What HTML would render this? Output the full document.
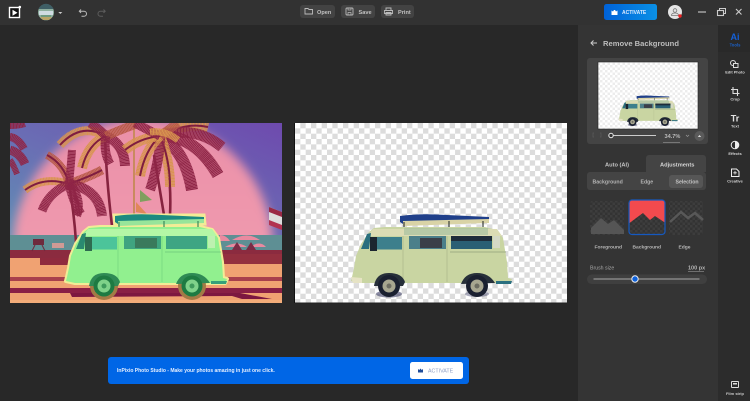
<!DOCTYPE html>
<html><head><meta charset="utf-8"><style>
html,body{margin:0;padding:0;background:#282828;}
body{width:750px;height:401px;overflow:hidden;position:relative;font-family:"Liberation Sans",sans-serif;}
svg{position:absolute;left:0;top:0}
text{font-family:"Liberation Sans",sans-serif;font-weight:700}
.r,.g,.o{fill:none;stroke-linecap:butt;stroke-dasharray:1.2 .25}
.r{stroke:#8f2546}.g{stroke:#d89450}.o{stroke:#b85a48}
.m{fill:none;stroke:#7f1f40;stroke-width:2}
</style></head><body>
<svg width="750" height="401" viewBox="0 0 750 401">
<defs>
<pattern id="ck" width="10.67" height="10.67" patternUnits="userSpaceOnUse" x="295" y="123"><rect width="10.67" height="10.67" fill="#fff"/><rect x="5.335" width="5.335" height="5.335" fill="#dcdcdc"/><rect y="5.335" width="5.335" height="5.335" fill="#dcdcdc"/></pattern>
<pattern id="ck2" width="5" height="5" patternUnits="userSpaceOnUse"><rect width="5" height="5" fill="#fff"/><rect width="2.500" height="2.500" fill="#ececec"/><rect x="2.500" y="2.500" width="2.500" height="2.500" fill="#ececec"/></pattern>
<pattern id="dk" width="5" height="5" patternUnits="userSpaceOnUse"><rect width="5" height="5" fill="#333"/><rect width="2.500" height="2.500" fill="#3d3d3d"/><rect x="2.500" y="2.500" width="2.500" height="2.500" fill="#3d3d3d"/></pattern>
<linearGradient id="sky" x1="0" y1="1" x2="1" y2="0"><stop offset="0" stop-color="#5f8fb5"/><stop offset=".45" stop-color="#6a6eb4"/><stop offset="1" stop-color="#6e4aae"/></linearGradient>
<linearGradient id="pk" x1="0" y1="0" x2="0" y2="1"><stop offset="0" stop-color="#ea8fa8"/><stop offset="1" stop-color="#f5a4b4"/></linearGradient>
<linearGradient id="act" x1="0" x2="1"><stop offset="0" stop-color="#0062d8"/><stop offset="1" stop-color="#0a90e6"/></linearGradient>
<clipPath id="c1"><rect x="10" y="123" width="272" height="180"/></clipPath>
<filter id="b1" x="-20%" y="-20%" width="140%" height="140%"><feGaussianBlur stdDeviation="5"/></filter>
<filter id="b05"><feGaussianBlur stdDeviation=".35"/></filter>
<g id="vanR">
 <ellipse cx="389" cy="294" rx="13" ry="3.500" fill="#2d2f5a" opacity=".55"/>
 <ellipse cx="477" cy="294" rx="12" ry="3" fill="#2d2f5a" opacity=".4"/>
 <path d="M400 216q20-3 47-1l42 2 0 3-86 4-3-2z" fill="#1f3f8a"/>
 <path d="M403 221l86-2 0 4-86 3z" fill="#d9d3a6"/>
 <path d="M404 222v13M449 221v13M483 221v13" stroke="#3a3f3a" stroke-width="1.200" fill="none"/>
 <path d="M352 277L351 281L360 283H510L512 279L508 278L507 262L503 238L497 230L485 227H385L374 228L369 232L361 244L356 256L354 268Z" fill="#c9d5a2"/>
 <path d="M373 229H497L502 236H368Z" fill="#dcdcb4"/>
 <path d="M404 228h84v7h-84z" fill="#a6c0a0" opacity=".7"/>
 <path d="M361 249l6-15 4-1-2 16z" fill="#2a6f7f"/>
 <rect x="375" y="237" width="27" height="12.500" fill="#3d7f8c"/><rect x="370" y="237" width="7" height="14" fill="#1b2530"/>
 <rect x="409" y="236" width="37" height="13" fill="#4b7f8a"/><rect x="420" y="238" width="22" height="10" fill="#3a3f48"/>
 <rect x="451" y="236" width="41" height="13" fill="#2a5f74"/><rect x="451" y="236" width="41" height="5" fill="#1e2c3a"/>
 <rect x="493" y="236" width="7" height="12" fill="#d5d9c6"/>
 <path d="M450 252h56" stroke="#8f9f7a" stroke-width=".8"/>
 <path d="M403 236v46M447 236v46" stroke="#a7b385" stroke-width=".6"/>
 <path d="M374 286q2-13 15-13t16 9l-2 4zM461 284q4-11 16-11t18 10z" fill="#27303a"/>
 <path d="M496 281h16l-1 3h-15z" fill="#2a6f7f"/>
 <circle cx="389" cy="286" r="11" fill="#1a2030"/><circle cx="389" cy="286" r="6.500" fill="#a7a690"/><circle cx="389" cy="286" r="2.500" fill="#6d6d62"/>
 <circle cx="477" cy="286" r="11" fill="#1a2030"/><circle cx="477" cy="286" r="6.500" fill="#a7a690"/><circle cx="477" cy="286" r="2.500" fill="#6d6d62"/>
 <path d="M351 277l11 1v5h-9z" fill="#e6e3c4"/>
</g>
</defs>

<!-- chrome -->
<rect width="750" height="401" fill="#282828"/>
<rect width="750" height="25" fill="#323232"/>
<rect x="578" y="25" width="140" height="376" fill="#343434"/>
<rect x="718" y="25" width="32" height="376" fill="#2c2c2c"/>
<rect x="718" y="25" width="32" height="27" fill="#292929"/>

<!-- logo -->
<rect x="9.500" y="7.500" width="10" height="10" fill="#111" stroke="#fff" stroke-width="1.400"/>
<path d="M12.500 9.800l5 3-5 3z" fill="#fff"/><circle cx="19.800" cy="7" r="1.300" fill="#fff"/>
<circle cx="46" cy="12.300" r="8" fill="#8fb0a0"/><path d="M38.500 9a8 8 0 0 1 15 0z" fill="#3f5f66"/><path d="M39 11h14v4H39z" fill="#cfdbe2"/><path d="M41 15h10v2H41z" fill="#6f9a80"/><path d="M40 17h12l-3 3h-6z" fill="#b8a468"/>
<path d="M58.300 12l2 2 2-2z" fill="#ccc"/>
<path d="M81 9.500l-1.700 1.700 1.700 1.700M79.500 11.200h4.500a2.500 2.500 0 0 1 0 5h-2.500" fill="none" stroke="#bbb" stroke-width="1"/>
<path d="M103.500 9.500l1.700 1.700-1.700 1.700M105 11.200h-4.500a2.500 2.500 0 0 0 0 5h2.500" fill="none" stroke="#5c5c5c" stroke-width="1"/>

<rect x="300" y="5" width="35" height="13" rx="3" fill="#434343"/>
<rect x="341" y="5" width="34" height="13" rx="3" fill="#434343"/>
<rect x="381" y="5" width="33" height="13" rx="3" fill="#434343"/>
<path d="M305 8.500h3l1 1h3.500v4.500h-7.500z" fill="none" stroke="#bbb" stroke-width=".9"/>
<rect x="346" y="8" width="7" height="7" rx="1" fill="none" stroke="#bbb" stroke-width=".9"/><path d="M348 8v2h3V8M348 15v-2.500h3V15" fill="none" stroke="#bbb" stroke-width=".7"/>
<path d="M386 8h5v2.500h-5zM384.500 10.500h8v3h-8zM386 12.500h5V15h-5z" fill="none" stroke="#bbb" stroke-width=".9"/>
<text x="317" y="14" font-size="5.600" fill="#c2c2c2">Open</text>
<text x="358.500" y="14" font-size="5.600" fill="#c2c2c2">Save</text>
<text x="398" y="14" font-size="5.600" fill="#c2c2c2">Print</text>

<rect x="604" y="4" width="53" height="16" rx="2.500" fill="url(#act)"/>
<path d="M611.500 10.500l1.500 1 1-1.500h1l1 1.500 1.500-1v4.500h-6z" fill="#fff"/>
<text x="622" y="14" font-size="5" fill="#dcebff">ACTIVATE</text>
<circle cx="675" cy="12" r="7" fill="#e4e4e4"/><circle cx="675" cy="10.500" r="1.800" fill="none" stroke="#777" stroke-width=".8"/><path d="M671.500 15.500q0-2.500 3.500-2.500t3.500 2.500z" fill="none" stroke="#777" stroke-width=".8"/>
<circle cx="680" cy="16" r="1.700" fill="#e22"/>
<path d="M698 12h8" stroke="#ccc" stroke-width="1.100"/>
<rect x="717.500" y="10.500" width="6" height="5" fill="none" stroke="#ccc" stroke-width="1.100"/><path d="M719.500 10v-1.500h6v5h-1.500" fill="none" stroke="#ccc" stroke-width="1"/>
<path d="M736 9l5.500 5.500M741.500 9L736 14.500" stroke="#ccc" stroke-width="1.100"/>

<!-- left photo -->
<g clip-path="url(#c1)">
 <rect x="10" y="123" width="272" height="115" fill="url(#sky)"/>
 <circle cx="143" cy="248" r="130" fill="url(#pk)" filter="url(#b1)"/>
 <rect x="10" y="235" width="272" height="16" fill="#5e8f94"/>
 <path d="M10 250h272v10H10z" fill="#8b2b3f"/>
 <rect x="10" y="258" width="272" height="46" fill="#f0a272"/>
 <rect x="40" y="258" width="30" height="7" fill="#8f2a3e"/><rect x="220" y="254" width="62" height="10" fill="#94303f"/>
 <rect x="10" y="277" width="272" height="4" fill="#a83f4c"/>
 <rect x="10" y="288" width="272" height="5" fill="#8a1f45"/>
 <path d="M70 293h170l32 6h-30l-10-3-160 1z" fill="#7d1740"/>
 <rect x="10" y="300" width="272" height="3" fill="#f4ad7a"/>
 <!-- pole & flags -->
 <path d="M134 123v95" stroke="#c98a5f" stroke-width="2"/>
 <path d="M140 190l12 10-12 2z" fill="#7f9f5f"/><path d="M136 202l11 12-11-2z" fill="#e0875a"/>
 <path d="M269 207l13 5v16l-13-5z" fill="#ddd"/><path d="M269 207l13 5v5l-13-5z" fill="#9a2845"/><path d="M269 220l13 5v5l-13-5z" fill="#b23350"/>
 <!-- beach stuff -->
 <path d="M232 240q15-9 28 0zM250 247q10-7 16 0zM225 247q12-7 22 0zM220 235q6 0 10 6h-10z" fill="#e98aa0"/>
 <path d="M232 250l5-8 5 8zM246 250l5-8 5 8z" fill="#7a2b45"/>
 <rect x="33" y="239" width="11" height="6" fill="#6e2a3d"/><path d="M35 245l-3 6M42 245l3 6" stroke="#6e2a3d"/>
 <rect x="52" y="243" width="12" height="5" fill="#d09a95"/>
 <!-- trunks -->
 <path d="M76 242q-2-30-7-58M112 226q-6-50-7-92M170 215q2-40-8-80M164 215q-5-30-10-60" fill="none" stroke="#86233f" stroke-width="2.600"/>
 <g filter="url(#b05)">
  <!-- crown 1 -->
  <path class="g" stroke-width="8" d="M69 184q-25-8-44 6"/><path class="m" d="M69 184q-25-8-44 6"/>
  <path class="o" stroke-width="8" d="M69 184q-5-20-22-29"/><path class="m" d="M69 184q-5-20-22-29"/>
  <path class="o" stroke-width="9" d="M69 184q22-8 33-14"/><path class="m" d="M69 184q22-8 33-14"/>
  <path class="r" stroke-width="10" d="M69 184q30 5 33 32"/>
  <path class="r" stroke-width="9" d="M69 184q-20 8-27 27"/>
  <path class="r" stroke-width="8" d="M69 184q2-20 3-34"/>
  <path class="r" stroke-width="9" d="M69 184q5 20 12 30"/>
  <path class="r" stroke-width="8" d="M69 184q14 14 8 32"/>
  <!-- crown 2 -->
  <path class="g" stroke-width="9" d="M106 136q-25-14-46 9"/><path class="m" d="M106 136q-25-14-46 9"/>
  <path class="g" stroke-width="10" d="M106 136q-18 8-24 32"/><path class="m" d="M106 136q-18 8-24 32"/>
  <path class="r" stroke-width="10" d="M106 136q18 8 19 30"/>
  <path class="r" stroke-width="9" d="M106 136q-8-8-16-13"/>
  <path class="o" stroke-width="9" d="M106 136q14-6 30-12"/>
  <path class="r" stroke-width="9" d="M106 136q-3 15 4 28"/>
  <!-- crown 3 -->
  <path class="g" stroke-width="10" d="M160 136Q185 122 208 127"/><path class="m" d="M160 136Q185 122 208 127"/>
  <path class="r" stroke-width="11" d="M160 136Q195 125 222 147"/>
  <path class="r" stroke-width="12" d="M160 136Q195 135 218 175"/>
  <path class="r" stroke-width="12" d="M160 136Q185 150 192 190"/>
  <path class="g" stroke-width="10" d="M160 136Q170 160 170 187"/><path class="m" d="M160 136Q170 160 170 187"/>
  <path class="r" stroke-width="10" d="M160 136Q160 160 150 190"/>
  <path class="g" stroke-width="10" d="M160 136Q145 150 140 176"/><path class="m" d="M160 136Q145 150 140 176"/>
  <path class="g" stroke-width="10" d="M160 136Q140 138 125 150"/><path class="m" d="M160 136Q140 138 125 150"/>
  <path class="r" stroke-width="9" d="M160 136Q148 130 135 123"/>
  <path class="o" stroke-width="9" d="M160 136Q168 130 178 123"/>
  <path class="g" stroke-width="7" d="M150 132Q165 130 178 140"/>
  <!-- corner palm -->
  <path class="r" stroke-width="6" d="M10 126q8 0 15-2"/><path class="r" stroke-width="8" d="M10 137q8 1 14 12"/><path class="r" stroke-width="9" d="M10 150q10 3 15 14"/><path class="r" stroke-width="6" d="M10 160q3 4 7 14"/>
 </g>
 <!-- green van (right van shifted by -285) -->
 <g transform="translate(-285 0)">
  <path d="M352 277L351 281L360 283H510L512 279L508 278L507 262L503 238L497 230L485 227H385L374 228L369 232L361 244L356 256L354 268Z" fill="#f2ec96" stroke="#f2ec96" stroke-width="4" stroke-linejoin="round"/>
  <path d="M399 215h90l1 9-90 1z" fill="#f2ec96" stroke="#f2ec96" stroke-width="3"/>
  <circle cx="389" cy="286" r="14" fill="#a37a45"/><circle cx="477" cy="286" r="14" fill="#a37a45"/>
  <path d="M400 216q20-3 47-1l42 2 0 3-86 4-3-2z" fill="#1c8a80"/>
  <path d="M403 221l86-2 0 4-86 3z" fill="#97e59a"/>
  <path d="M404 222v13M449 221v13M483 221v13" stroke="#3e8a5a" stroke-width="1.200" fill="none"/>
  <path d="M352 277L351 281L360 283H510L512 279L508 278L507 262L503 238L497 230L485 227H385L374 228L369 232L361 244L356 256L354 268Z" fill="#91f08f"/>
  <path d="M373 229H497L502 236H368Z" fill="#b4f7a6"/>
  <path d="M361 249l6-15 4-1-2 16z" fill="#2a8a70"/>
  <rect x="375" y="237" width="27" height="12.500" fill="#4cc49a"/><rect x="370" y="237" width="7" height="14" fill="#2e6b50"/>
  <rect x="409" y="236" width="37" height="13" fill="#3fa480"/><rect x="420" y="238" width="22" height="10" fill="#3a7a5c"/>
  <rect x="451" y="236" width="41" height="13" fill="#3ea583"/>
  <rect x="493" y="236" width="7" height="12" fill="#bdf1b0"/>
  <path d="M450 252h56" stroke="#6cc77a" stroke-width=".8"/>
  <path d="M403 236v46M447 236v46" stroke="#70d07c" stroke-width=".6"/>
  <path d="M374 286q2-13 15-13t16 9l-2 4zM461 284q4-11 16-11t18 10z" fill="#2f8a55"/>
  <path d="M496 281h16l-1 3h-15z" fill="#36a07a"/>
  <circle cx="389" cy="286" r="10.500" fill="#1e7a42"/><circle cx="389" cy="286" r="6.500" fill="#7fd28a"/><circle cx="389" cy="286" r="2.500" fill="#3f9a5c"/>
  <circle cx="477" cy="286" r="10.500" fill="#1e7a42"/><circle cx="477" cy="286" r="6.500" fill="#7fd28a"/><circle cx="477" cy="286" r="2.500" fill="#3f9a5c"/>
 </g>
</g>

<!-- right photo -->
<rect x="295" y="123" width="272" height="180" fill="url(#ck)"/>
<rect x="294" y="123" width="1" height="180" fill="#111"/>
<rect x="295" y="302.500" width="272" height="1" fill="#222"/>
<use href="#vanR"/>

<!-- banner -->
<rect x="108" y="357" width="361" height="27" rx="3" fill="#0066e6"/>
<text x="117" y="372" font-size="5" fill="#e3eeff">InPixio Photo Studio - Make your photos amazing in just one click.</text>
<rect x="410" y="362" width="53" height="17" rx="2.500" fill="#fff"/>
<path d="M418 369l1.300 1 1.200-1.500 1.200 1.500 1.300-1v3.500h-5z" fill="#1f4c9a"/>
<text x="428" y="372.500" font-size="5.300" fill="#8b9cc2" style="font-weight:400">ACTIVATE</text>

<!-- panel -->
<path d="M597 43h-6M593.500 40.500L591 43l2.500 2.500" fill="none" stroke="#ccc" stroke-width="1"/>
<text x="603" y="46" font-size="7.600" fill="#bdbdbd">Remove Background</text>
<rect x="587" y="58" width="121" height="86" rx="3" fill="#444"/>
<rect x="598" y="62" width="100" height="67" fill="url(#ck2)"/>
<rect x="598" y="62" width="100" height="67" fill="none" stroke="#222" stroke-width=".6"/>
<g transform="translate(598 62) scale(.3676) translate(-295 -123)"><use href="#vanR"/></g>
<path d="M594 133h-1v4h1M600 133h1v4h-1" fill="none" stroke="#5a5a5a" stroke-width=".7"/>
<path d="M611 135.500h45" stroke="#ccc" stroke-width="1"/>
<circle cx="611" cy="135.500" r="2.200" fill="#333" stroke="#eee" stroke-width="1"/>
<text x="664.500" y="138" font-size="5.600" fill="#bbb">34.7%</text>
<path d="M663 142.500h17" stroke="#888" stroke-width=".7"/>
<path d="M686 135l1.500 1.500 1.500-1.500" fill="none" stroke="#999" stroke-width=".7"/>
<circle cx="699.500" cy="136" r="5" fill="#5a5a5a"/><path d="M697.800 137l1.700-2 1.700 2z" fill="#ddd"/>

<path d="M646 172v-14a3 3 0 0 1 3-3h54a3 3 0 0 1 3 3v14z" fill="#444"/>
<rect x="587" y="172" width="119" height="18" rx="3" fill="#444"/>
<rect x="669" y="175" width="34" height="13" rx="3" fill="#565656"/>
<text x="605" y="166.500" font-size="5.700" fill="#c5c5c5">Auto (AI)</text>
<text x="660" y="166.500" font-size="5.700" fill="#d5d5d5">Adjustments</text>
<text x="592.500" y="183.500" font-size="5.200" fill="#b5b5b5">Background</text>
<text x="640.500" y="183.500" font-size="5.200" fill="#b5b5b5">Edge</text>
<text x="675.500" y="183.500" font-size="5.200" fill="#c5c5c5">Selection</text>

<rect x="590" y="201" width="34" height="34" rx="2.500" fill="url(#dk)"/>
<path d="M591 234V228L601 218L608 224L614 220L624 230V234Z" fill="#555"/>
<rect x="629" y="200" width="36" height="34.500" rx="3" fill="url(#dk)"/>
<path d="M629.500 223V203a3 3 0 0 1 3-3h30a3 3 0 0 1 3 3v20L655 216L650 220L643 213Z" fill="#f24a4e"/>
<rect x="629" y="200" width="36" height="34.500" rx="3" fill="none" stroke="#1559c0" stroke-width="1.200"/>
<rect x="669" y="201" width="34" height="34" rx="2.500" fill="url(#dk)"/>
<path d="M670 222L681 212L688 218L695 213L703 220" fill="none" stroke="#585858" stroke-width="2.500"/>
<text x="594.500" y="248.500" font-size="4.900" fill="#b8b8b8">Foreground</text>
<text x="632.500" y="248.500" font-size="4.900" fill="#b8b8b8">Background</text>
<text x="678.500" y="248.500" font-size="4.900" fill="#b8b8b8">Edge</text>
<text x="590" y="269.500" font-size="5.200" fill="#a5a5a5" style="font-weight:400">Brush size</text>
<text x="688" y="269.500" font-size="5.500" fill="#b5b5b5">100 px</text>
<path d="M688 271.500h16" stroke="#8a8a8a" stroke-width=".7"/>
<rect x="587" y="274.500" width="120" height="9.500" rx="4.700" fill="#3f3f3f"/>
<path d="M593.500 279h106" stroke="#a8a8a8" stroke-width="1.100"/>
<circle cx="635" cy="279" r="3.200" fill="#0f62dc" stroke="#eee" stroke-width="1"/>

<!-- rail -->
<text x="735" y="40" text-anchor="middle" font-size="9" fill="#1460d8">Ai</text>
<text x="735" y="46.500" text-anchor="middle" font-size="4.200" fill="#1b62cc">Tools</text>
<circle cx="733" cy="63" r="2.500" fill="none" stroke="#ddd" stroke-width="1"/><rect x="733.500" y="63.500" width="4.500" height="4" fill="#2c2c2c" stroke="#ddd" stroke-width="1"/>
<text x="735" y="73.500" text-anchor="middle" font-size="3.900" fill="#d5d5d5">Edit Photo</text>
<path d="M733 87v6.500h6.500M731 89.500h6.500V96" fill="none" stroke="#ddd" stroke-width="1.100"/>
<text x="735" y="100.500" text-anchor="middle" font-size="4" fill="#d5d5d5">Crop</text>
<text x="735" y="121.500" text-anchor="middle" font-size="9" fill="#e2e2e2">Tr</text>
<text x="735" y="127.500" text-anchor="middle" font-size="4" fill="#d5d5d5">Text</text>
<circle cx="735" cy="145" r="3.800" fill="#2c2c2c" stroke="#eee" stroke-width="1"/><path d="M735 141.200a3.800 3.800 0 0 1 0 7.600z" fill="#eee"/>
<text x="735" y="155" text-anchor="middle" font-size="4" fill="#d5d5d5">Effects</text>
<path d="M731.500 169h5l2.500 2.500v5h-7.500z" fill="none" stroke="#eee" stroke-width="1"/><path d="M735 171v3.500M733.300 172.800h3.500" stroke="#eee" stroke-width=".8"/>
<text x="735" y="182.500" text-anchor="middle" font-size="4" fill="#d5d5d5">Creative</text>
<rect x="731.500" y="381.500" width="7" height="6" rx=".5" fill="none" stroke="#ddd" stroke-width="1"/><rect x="733" y="383" width="4" height="1.500" fill="#ddd"/>
<text x="735" y="395" text-anchor="middle" font-size="4" fill="#c5c5c5">Film strip</text>
</svg>
</body></html>
